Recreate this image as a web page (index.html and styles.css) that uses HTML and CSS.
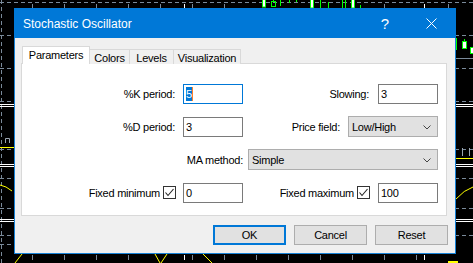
FILE: index.html
```html
<!DOCTYPE html>
<html>
<head>
<meta charset="utf-8">
<link rel="stylesheet" href="styles.css">
</head>
<body>
<svg class="chart" width="473" height="263" viewBox="0 0 473 263">
  <rect x="0" y="0" width="473" height="263" fill="#000"/>
  <g stroke="#7a8a9a" stroke-width="1" stroke-dasharray="4 3" fill="none">
    <line x1="0" y1="2.5" x2="473" y2="2.5"/>
    <line x1="1.5" y1="0" x2="1.5" y2="263"/>
    <line x1="0" y1="35.5" x2="473" y2="35.5"/>
    <line x1="0" y1="68.5" x2="473" y2="68.5"/>
    <line x1="0" y1="101.5" x2="473" y2="101.5"/>
    <line x1="0" y1="149.5" x2="473" y2="149.5"/>
    <line x1="0" y1="178.5" x2="473" y2="178.5"/>
    <line x1="0" y1="208.5" x2="473" y2="208.5"/>
    <line x1="0" y1="235.5" x2="473" y2="235.5"/>
    <line x1="0" y1="244.5" x2="14" y2="244.5"/>
  </g>
  <line x1="456" y1="58.5" x2="473" y2="58.5" stroke="#7a8a9a"/>
  <g stroke="#fff" stroke-width="1">
    <line x1="0" y1="104.5" x2="473" y2="104.5"/>
    <line x1="0" y1="106.5" x2="473" y2="106.5"/>
    <line x1="0" y1="164.5" x2="473" y2="164.5"/>
    <line x1="0" y1="166.5" x2="473" y2="166.5"/>
    <line x1="0" y1="219.5" x2="473" y2="219.5"/>
    <line x1="0" y1="221.5" x2="473" y2="221.5"/>
  </g>
  <g stroke="#9aa5b0" stroke-width="1">
    <path d="M5.5 143 V138.5 H9.5 V143" fill="none"/>
    <line x1="462.5" y1="148" x2="462.5" y2="156"/>
    <line x1="469.5" y1="148" x2="469.5" y2="156"/>
  </g>
  <g stroke="#ffff00" stroke-width="1" fill="none">
    <line x1="0" y1="147.5" x2="14" y2="147.5"/>
    <line x1="456" y1="158.5" x2="473" y2="158.5"/>
    <path d="M0 185 Q6 186 12 191"/>
    <path d="M456 199 Q464 190 473 187"/>
    <line x1="22" y1="254" x2="15" y2="263"/>
    <line x1="155" y1="254" x2="160" y2="263"/>
    <line x1="167" y1="254" x2="161" y2="263"/>
    <line x1="203" y1="254" x2="212" y2="263"/>
  </g>
  <rect x="448" y="261" width="10" height="2" fill="#ffff00"/>
  <g stroke="#7a8a9a" stroke-width="1">
    <line x1="32.5" y1="4" x2="32.5" y2="8"/>
    <line x1="64.5" y1="4" x2="64.5" y2="8"/>
    <line x1="96.5" y1="4" x2="96.5" y2="8"/>
    <line x1="128.5" y1="4" x2="128.5" y2="8"/>
    <line x1="160.5" y1="4" x2="160.5" y2="8"/>
    <line x1="192.5" y1="4" x2="192.5" y2="8"/>
    <line x1="224.5" y1="4" x2="224.5" y2="8"/>
    <line x1="384.5" y1="4" x2="384.5" y2="8"/>
    <line x1="448.5" y1="4" x2="448.5" y2="8"/>
    <line x1="32.5" y1="255" x2="32.5" y2="260"/>
    <line x1="64.5" y1="255" x2="64.5" y2="260"/>
    <line x1="96.5" y1="255" x2="96.5" y2="260"/>
    <line x1="128.5" y1="255" x2="128.5" y2="260"/>
    <line x1="192.5" y1="255" x2="192.5" y2="260"/>
    <line x1="224.5" y1="255" x2="224.5" y2="260"/>
    <line x1="256.5" y1="255" x2="256.5" y2="260"/>
    <line x1="288.5" y1="255" x2="288.5" y2="260"/>
    <line x1="320.5" y1="255" x2="320.5" y2="260"/>
    <line x1="352.5" y1="255" x2="352.5" y2="260"/>
    <line x1="384.5" y1="255" x2="384.5" y2="260"/>
    <line x1="416.5" y1="255" x2="416.5" y2="260"/>
  </g>
  <g stroke="#fff">
    <line x1="184.5" y1="4" x2="184.5" y2="8"/>
    <line x1="424.5" y1="4" x2="424.5" y2="8"/>
    <line x1="184.5" y1="255" x2="184.5" y2="260"/>
    <line x1="424.5" y1="255" x2="424.5" y2="260"/>
  </g>
  <g stroke="#00ff00" stroke-width="1">
    <rect x="262.5" y="-1" width="3" height="8" fill="#fff"/>
    <rect x="271.5" y="1.5" width="4" height="5" fill="none"/>
    <line x1="273.5" y1="0" x2="273.5" y2="1.5"/>
    <line x1="280.5" y1="0" x2="280.5" y2="6"/>
    <line x1="289.5" y1="0" x2="289.5" y2="3"/>
    <line x1="296.5" y1="0" x2="296.5" y2="2"/>
    <rect x="310.5" y="-1" width="3" height="9" fill="#fff"/>
    <line x1="320.5" y1="0" x2="320.5" y2="8"/>
    <line x1="328.5" y1="2" x2="328.5" y2="8"/>
    <line x1="342.5" y1="0" x2="342.5" y2="8"/>
    <line x1="345.5" y1="0" x2="345.5" y2="8"/>
    <rect x="351.5" y="-1" width="3" height="9" fill="#fff"/>
    <line x1="360.5" y1="5" x2="360.5" y2="8"/>
    <line x1="456.5" y1="38" x2="456.5" y2="50"/>
    <rect x="462.5" y="41.5" width="4" height="7" fill="#fff"/>
    <line x1="464.5" y1="39" x2="464.5" y2="41.5"/>
    <rect x="470.5" y="47.5" width="4" height="6" fill="#fff"/>
  </g>
</svg>

<div class="dialog">
  <div class="titlebar">
    <span class="title">Stochastic Oscillator</span>
    <span class="help">?</span>
    <svg class="close" width="11" height="11" viewBox="0 0 11 11">
      <path d="M0.5 0.5 L10.5 10.5 M10.5 0.5 L0.5 10.5" stroke="#fff" stroke-width="1" fill="none"/>
    </svg>
  </div>
  <div class="client">
    <div class="tabs">
      <div class="tab active">Parameters</div>
      <div class="tab t-colors">Colors</div>
      <div class="tab t-levels">Levels</div>
      <div class="tab t-vis">Visualization</div>
    </div>
    <div class="panel">
      <div class="grid">
        <div class="label">%K period:</div>
        <div class="input focused"><span class="sel">5</span><span class="caret"></span></div>
        <div class="label label-r">Slowing:</div>
        <div class="input">3</div>

        <div class="label">%D period:</div>
        <div class="input">3</div>
        <div class="label price-label">Price field:</div>
        <div class="select price">Low/High<svg class="chev" width="8" height="5" viewBox="0 0 8 5"><path d="M0.5 0.5 L4 4 L7.5 0.5" stroke="#444" fill="none"/></svg></div>

        <div class="label ma-label">MA method:</div>
        <div class="select ma">Simple<svg class="chev" width="8" height="5" viewBox="0 0 8 5"><path d="M0.5 0.5 L4 4 L7.5 0.5" stroke="#444" fill="none"/></svg></div>

        <div class="label fixed">Fixed minimum <span class="check"><svg width="11" height="11" viewBox="0 0 11 11"><path d="M1.5 5.5 L4 8.5 L9.5 2" stroke="#222" stroke-width="1.1" fill="none"/></svg></span></div>
        <div class="input">0</div>
        <div class="label fixed label-r2">Fixed maximum <span class="check"><svg width="11" height="11" viewBox="0 0 11 11"><path d="M1.5 5.5 L4 8.5 L9.5 2" stroke="#222" stroke-width="1.1" fill="none"/></svg></span></div>
        <div class="input">100</div>
      </div>
    </div>
    <div class="buttons">
      <div class="btn default">OK</div>
      <div class="btn">Cancel</div>
      <div class="btn">Reset</div>
    </div>
  </div>
</div>
</body>
</html>
```

FILE: styles.css
```css
html, body {
  margin: 0;
  padding: 0;
  width: 473px;
  height: 263px;
  overflow: hidden;
  background: #000;
}
body {
  position: relative;
  font-family: "Liberation Sans", Arial, sans-serif;
  font-size: 11px;
  letter-spacing: -0.25px;
  color: #000;
}
.chart {
  position: absolute;
  left: 0;
  top: 0;
  display: block;
}
.dialog {
  position: absolute;
  left: 14px;
  top: 8px;
  width: 442px;
  height: 246px;
  box-sizing: border-box;
  border: 1px solid #1883d7;
  border-top: none;
  background: #f0f0f0;
  display: flex;
  flex-direction: column;
}
.titlebar {
  height: 30px;
  margin: 0 -1px;
  background: #0078d7;
  display: flex;
  align-items: center;
  color: #fff;
  padding-left: 9px;
  box-sizing: border-box;
  letter-spacing: 0;
}
.title {
  font-size: 12px;
  flex: 1;
  padding-top: 1px;
}
.help {
  font-size: 15px;
  margin-right: 37px;
  padding-top: 1px;
}
.close {
  margin-right: 19px;
  display: block;
}
.client {
  flex: 1;
  padding: 8px 8px 0 6px;
  display: flex;
  flex-direction: column;
}
.tabs {
  display: flex;
  align-items: flex-end;
  height: 18px;
  margin-left: 1px;
  margin-bottom: -1px;
  position: relative;
  z-index: 1;
}
.tab {
  height: 15px;
  box-sizing: border-box;
  border: 1px solid #d9d9d9;
  border-bottom: none;
  background: #f0f0f0;
  display: flex;
  align-items: center;
  justify-content: center;
  margin-left: -1px;
  padding-top: 1px;
}
.tab.active {
  height: 18px;
  background: #fff;
  width: 68px;
  margin-left: 0;
  position: relative;
  z-index: 2;
  padding-top: 0;
  padding-bottom: 2px;
}
.t-colors { width: 41px; }
.t-levels { width: 45px; }
.t-vis { width: 68px; }
.panel {
  height: 153px;
  box-sizing: border-box;
  border: 1px solid #d9d9d9;
  background: #fff;
  padding-top: 20px;
}
.grid {
  display: grid;
  grid-template-columns: 161px 60px 135px 60px;
  grid-template-rows: 20px 21px 21px 20px;
  row-gap: 12.2px;
  align-items: center;
}
.label {
  text-align: right;
  padding-right: 8px;
  white-space: nowrap;
}
.label-r {
  padding-right: 9px;
}
.price-label {
  padding-right: 38px;
}
.input {
  height: 20px;
  box-sizing: border-box;
  border: 1px solid #7a7a7a;
  background: #fff;
  padding-left: 2px;
  display: flex;
  align-items: center;
}
.input.focused {
  border-color: #0078d7;
  padding-left: 2px;
}
.sel {
  background: #0078d7;
  color: #fff;
  padding: 1px 0;
}
.caret {
  display: inline-block;
  width: 1px;
  height: 14px;
  background: #ff7f27;
}
.select {
  height: 21px;
  box-sizing: border-box;
  border: 1px solid #adadad;
  background: #e1e1e1;
  display: flex;
  align-items: center;
  padding-left: 3px;
  position: relative;
}
.price {
  margin-left: -30px;
}
.chev {
  position: absolute;
  right: 6px;
  top: 8px;
}
.ma-label {
  grid-column: 1 / 3;
  padding-right: 0;
}
.ma {
  grid-column: 3 / 5;
  margin-left: 5px;
}
.fixed {
  display: flex;
  align-items: center;
  justify-content: flex-end;
  padding-right: 7px;
}
.label-r2 {
  padding-right: 8px;
}
.check {
  width: 13px;
  height: 13px;
  box-sizing: border-box;
  border: 1px solid #333;
  background: #fff;
  margin-left: 3px;
  display: flex;
  align-items: center;
  justify-content: center;
}
.check svg {
  display: block;
}
.buttons {
  display: flex;
  justify-content: flex-end;
  gap: 8px;
  margin-top: 9px;
  margin-right: -1px;
}
.btn {
  width: 73px;
  height: 20px;
  box-sizing: border-box;
  border: 1px solid #adadad;
  background: #e1e1e1;
  display: flex;
  align-items: center;
  justify-content: center;
}
.btn.default {
  border: 2px solid #0078d7;
}
```
